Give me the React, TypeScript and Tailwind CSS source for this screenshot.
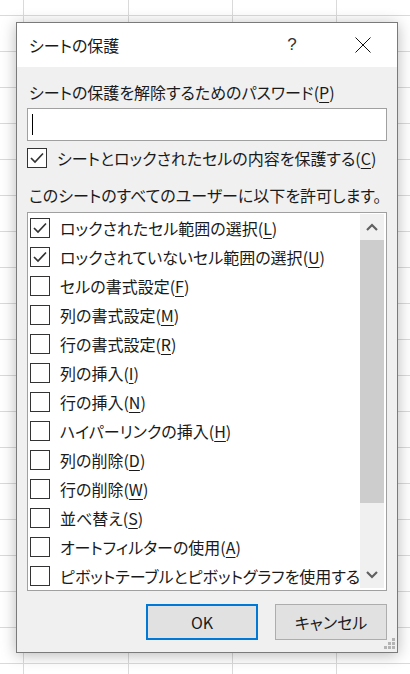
import React from "react";

type Item = { label: string; key: string; checked: boolean };

const items: Item[] = [
  { label: "ロックされたセル範囲の選択", key: "L", checked: true },
  { label: "ロックされていないセル範囲の選択", key: "U", checked: true },
  { label: "セルの書式設定", key: "F", checked: false },
  { label: "列の書式設定", key: "M", checked: false },
  { label: "行の書式設定", key: "R", checked: false },
  { label: "列の挿入", key: "I", checked: false },
  { label: "行の挿入", key: "N", checked: false },
  { label: "ハイパーリンクの挿入", key: "H", checked: false },
  { label: "列の削除", key: "D", checked: false },
  { label: "行の削除", key: "W", checked: false },
  { label: "並べ替え", key: "S", checked: false },
  { label: "オートフィルターの使用", key: "A", checked: false },
  { label: "ピボットテーブルとピボットグラフを使用する", key: "", checked: false },
];

const colWidths = ["w-[24px]", "w-[105px]", "w-[104px]", "w-[104px]", "w-[104px]"];

// Checkbox square, 20px
const CheckBox: React.FC<{ checked: boolean }> = ({ checked }) => (
  <div className="w-[20px] h-[20px] shrink-0 border border-[#333333] bg-white flex items-center justify-center">
    {checked && (
      <svg width="18" height="18" viewBox="0 0 18 18">
        <polyline
          points="3,9 7,13 15,4.5"
          fill="none"
          stroke="#333333"
          strokeWidth="1.7"
        />
      </svg>
    )}
  </div>
);

const Label: React.FC<{ text: string; k: string }> = ({ text, k }) => (
  <span className="whitespace-nowrap">
    {text}
    {k && (
      <>
        (<span className="underline underline-offset-[3px]">{k}</span>)
      </>
    )}
  </span>
);

const Chevron: React.FC<{ up?: boolean }> = ({ up }) => (
  <svg width="12" height="8" viewBox="0 0 12 8">
    <polyline
      points={up ? "1,7 6,2 11,7" : "1,1 6,6 11,1"}
      fill="none"
      stroke="#606060"
      strokeWidth="2.2"
    />
  </svg>
);

export default function App() {
  return (
    <div className="relative w-[410px] h-[674px] overflow-hidden bg-white font-['Noto_Sans_CJK_JP',sans-serif] [font-feature-settings:'palt'] text-[#1a1a1a]">
      {/* spreadsheet grid behind */}
      <div className="flex flex-col">
        {Array.from({ length: 20 }).map((_, r) => (
          <div key={r} className={`flex ${r === 0 ? "h-[16px]" : "h-[36px]"}`}>
            {colWidths.map((w, c) => (
              <div key={c} className={`${w} shrink-0 border-r border-b border-[#dadada]`} />
            ))}
          </div>
        ))}
      </div>

      {/* dialog */}
      <div className="absolute left-[16px] top-[22px] w-[382px] h-[631px] border border-[#7a7a7a] bg-[#f0f0f0] shadow-[0_2px_14px_rgba(0,0,0,0.28)] flex flex-col">
        {/* title bar */}
        <div className="h-[44px] bg-white flex items-center pl-[12px] text-[16px]">
          <span className="flex-1">シートの保護</span>
          <span className="w-[10px] text-[17px] text-[#333] font-['Liberation_Sans',sans-serif] mr-[58px] text-center">?</span>
          <svg width="16" height="16" viewBox="0 0 16 16" className="mr-[26px]">
            <line x1="0.5" y1="0.5" x2="15.5" y2="15.5" stroke="#111" strokeWidth="1" />
            <line x1="15.5" y1="0.5" x2="0.5" y2="15.5" stroke="#111" strokeWidth="1" />
          </svg>
        </div>

        {/* body */}
        <div className="flex-1 flex flex-col px-[10px] pt-[15px] text-[16px]">
          <div className="h-[20px] flex items-center pl-[2px]">
            <Label text="シートの保護を解除するためのパスワード" k="P" />
          </div>
          <div className="mt-[6px] h-[33px] border border-[#a0a0a0] bg-white flex items-center pl-[4px]">
            <div className="w-[1px] h-[21px] bg-black" />
          </div>

          <div className="mt-[7px] h-[20px] flex items-center">
            <CheckBox checked />
            <span className="ml-[10px]">
              <Label text="シートとロックされたセルの内容を保護する" k="C" />
            </span>
          </div>

          <div className="mt-[17px] h-[20px] flex items-center pl-[2px] whitespace-nowrap">
            このシートのすべてのユーザーに以下を許可します。
          </div>

          {/* list box */}
          <div className="mt-[7px] h-[379px] border border-[#a0a0a0] bg-white flex overflow-hidden">
            <div className="flex-1 flex flex-col overflow-hidden">
              {items.map((it, i) => (
                <div key={i} className="h-[29px] shrink-0 flex items-center pl-[2px]">
                  <CheckBox checked={it.checked} />
                  <span className="ml-[10px]">
                    <Label text={it.label} k={it.key} />
                  </span>
                </div>
              ))}
            </div>
            <div className="w-[24px] shrink-0 mt-[1px] mb-[2px] mr-[2px] bg-[#f0f0f0] flex flex-col">
              <div className="h-[26px] flex items-center justify-center">
                <Chevron up />
              </div>
              <div className="h-[263px] bg-[#cdcdcd]" />
              <div className="flex-1 flex items-end justify-center pb-[9px]">
                <Chevron />
              </div>
            </div>
          </div>

          {/* buttons */}
          <div className="mt-[13px] flex justify-end gap-[17px]">
            <button className="w-[112px] h-[36px] border-2 border-[#0078d7] bg-[#e1e1e1] text-[16px]">
              OK
            </button>
            <button className="w-[112px] h-[36px] border border-[#adadad] bg-[#e1e1e1] text-[16px]">
              キャンセル
            </button>
          </div>
        </div>

        {/* resize grip */}
        <div className="absolute right-[2px] bottom-[3px] grid grid-cols-3 gap-[1px]">
          {[0, 0, 1, 0, 1, 1, 1, 1, 1].map((v, i) => (
            <div key={i} className={`w-[3px] h-[3px] ${v ? "bg-[#b4b4b4]" : ""}`} />
          ))}
        </div>
      </div>
    </div>
  );
}
